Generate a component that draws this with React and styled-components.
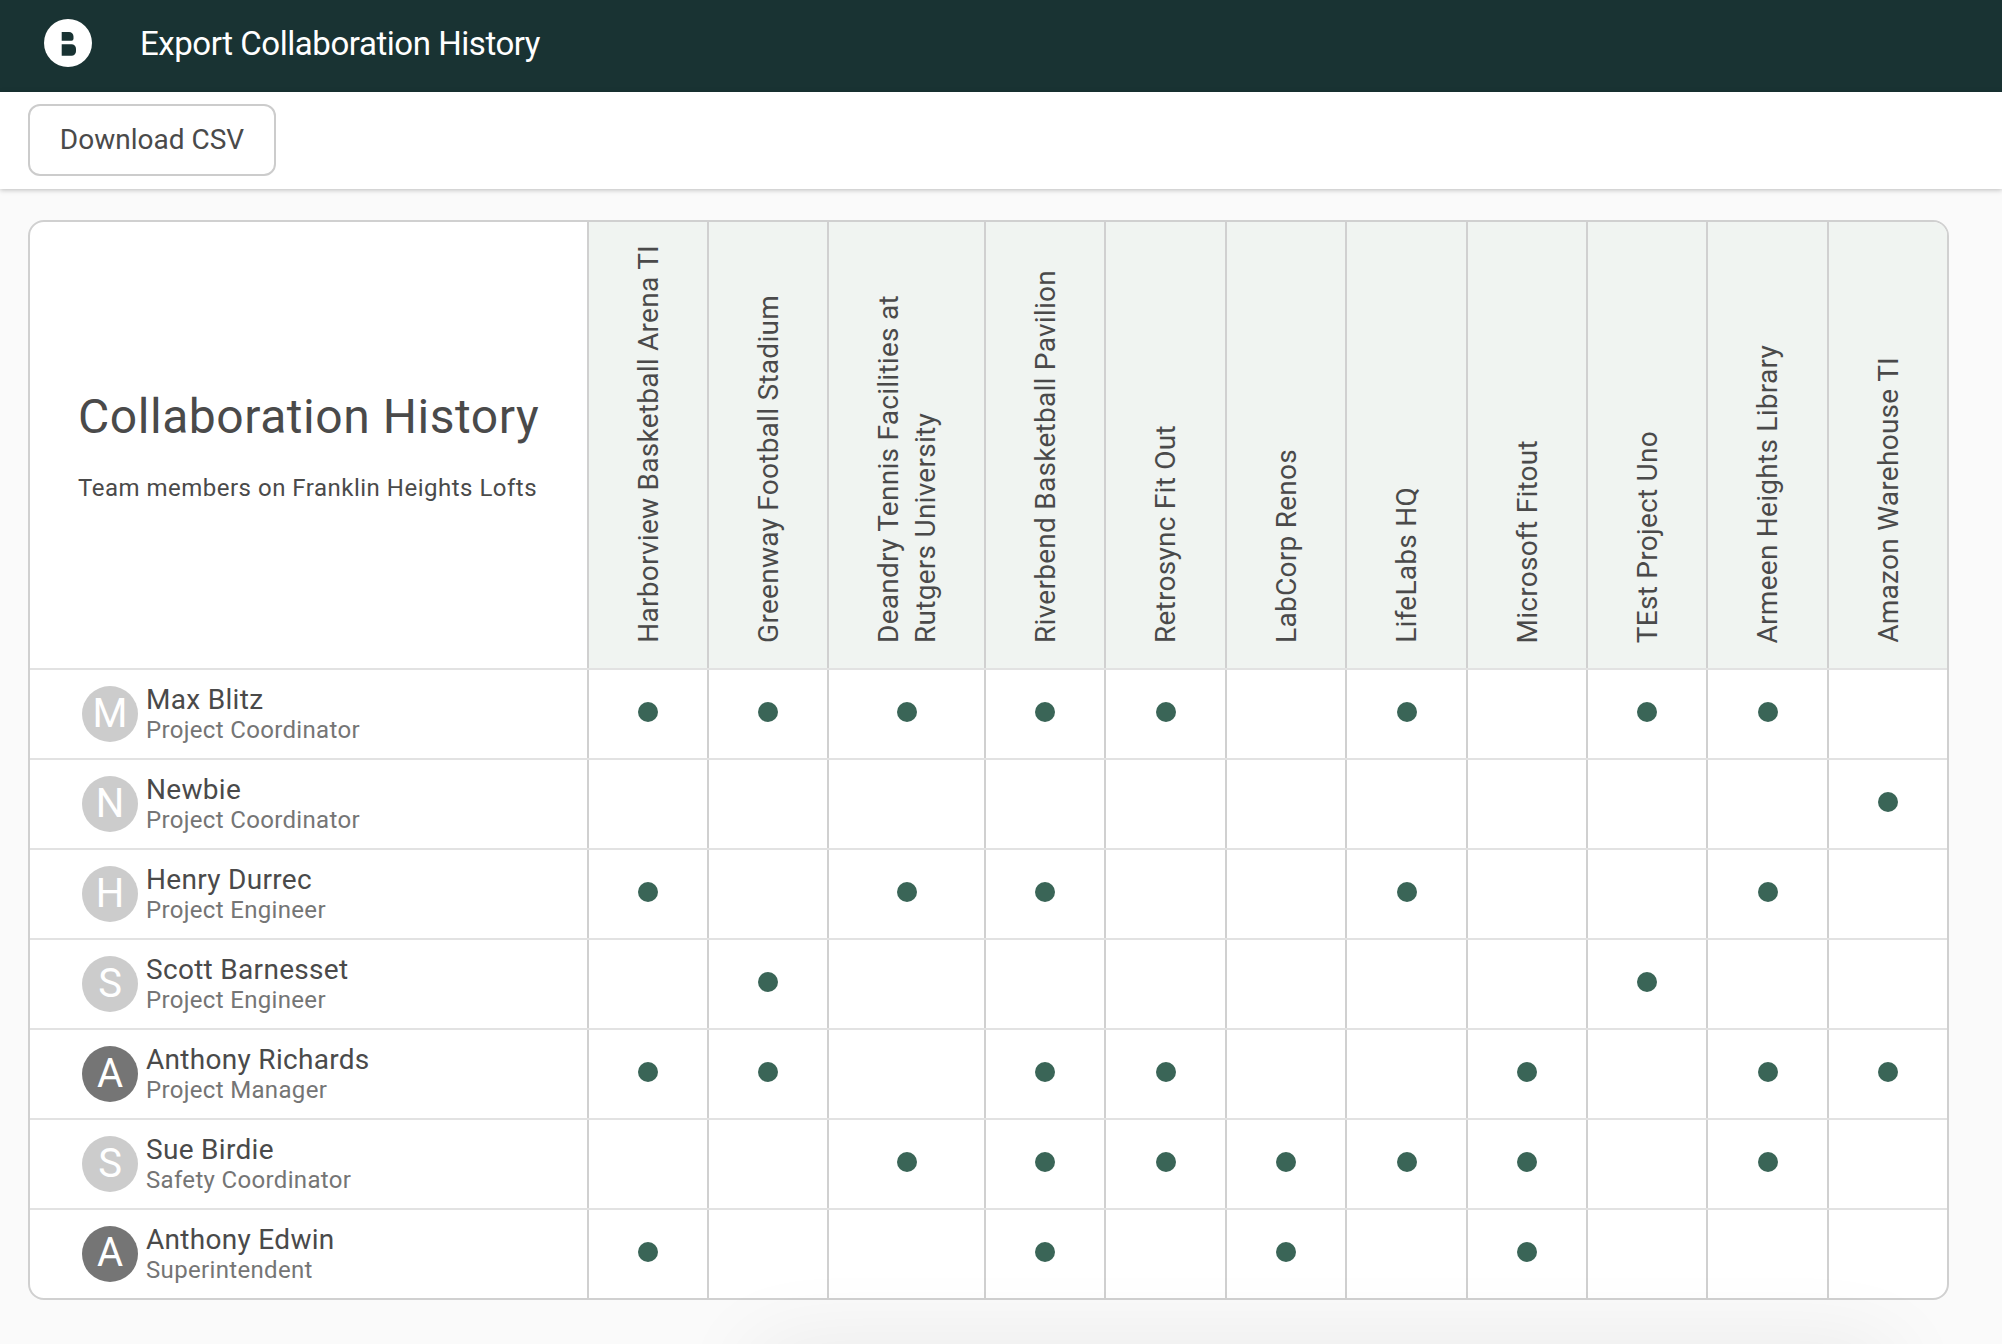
import React from "react";
import styled, { createGlobalStyle } from "styled-components";

const Global = createGlobalStyle`
  html, body { margin: 0; padding: 0; background: #fafafa; }
  body { font-family: Roboto, "Liberation Sans", sans-serif; color: #4a4a4a; overflow: hidden; }
  * { box-sizing: border-box; }
`;

const Page = styled.div`
  width: 2002px;
  height: 1344px;
  display: flex;
  flex-direction: column;
  background: #fafafa;
  position: relative;
  overflow: hidden;
`;
const BottomGlow = styled.div`
  position: absolute;
  top: 1352px;
  left: 755px;
  width: 1135px;
  height: 60px;
  box-shadow: 0 0 90px rgba(0, 0, 0, 0.09);
`;
const TopBar = styled.header`
  height: 92px;
  background: #193333;
  display: flex;
  align-items: center;
  padding: 0 0 6px 44px;
  flex: none;
`;
const Logo = styled.svg`
  width: 48px;
  height: 48px;
  flex: none;
  margin-right: 48px;
`;
const TopTitle = styled.h1`
  margin: 0;
  font-weight: 400;
  font-size: 33px;
  letter-spacing: -0.45px;
  color: #fff;
`;
const Toolbar = styled.div`
  height: 97px;
  flex: none;
  background: #fff;
  padding: 12px 28px 0;
  box-shadow: 0 1px 5px rgba(0, 0, 0, 0.25);
  position: relative;
`;
const DownloadButton = styled.button`
  width: 248px;
  height: 72px;
  background: #fff;
  border: 2px solid #cccccc;
  border-radius: 12px;
  font: 400 28px Roboto, sans-serif;
  color: #4a4a4a;
  padding: 0 0 2px;
`;
const Card = styled.div`
  margin: 31px 0 0 28px;
  width: 1921px;
  background: #fff;
  border: 2px solid #d0d0d0;
  border-radius: 16px;
  overflow: hidden;
  position: relative;
`;
const Grid = styled.table`
  border-collapse: collapse;
  table-layout: fixed;
  width: 1917px;
`;
const IntroCell = styled.th`
  width: 558px;
  height: 447px;
  padding: 3px 0 0 48px;
  text-align: left;
  font-weight: 400;
  vertical-align: middle;
  border-bottom: 2px solid #e2e2e2;
`;
const IntroTitle = styled.div`
  font-size: 48px;
  line-height: 56px;
  color: #4a4a4a;
  letter-spacing: 0.55px;
`;
const IntroSub = styled.div`
  margin-top: 27px;
  font-size: 24px;
  line-height: 32px;
  color: #4a4a4a;
  letter-spacing: 0.5px;
`;
const ProjectCell = styled.th`
  width: ${(p) => p.$width}px;
  background: #f0f4f1;
  border-left: 2px solid #d0d0d0;
  border-bottom: 2px solid #e2e2e2;
  padding: 0 0 25px;
  vertical-align: bottom;
  font-weight: 400;
`;
const ProjectName = styled.div`
  writing-mode: vertical-rl;
  transform: rotate(180deg);
  max-height: 400px;
  margin: 0 auto;
  font-size: 28px;
  line-height: 37px;
  letter-spacing: 0.27px;
  text-align: left;
  color: #4a4a4a;
`;
const Row = styled.tr`
  height: ${(p) => (p.$last ? "88.5px" : "90px")};
`;
const PersonCell = styled.td`
  padding: 0 0 0 52px;
  border-bottom: ${(p) => (p.$last ? "none" : "2px solid #e2e2e2")};
`;
const Person = styled.div`
  display: flex;
  align-items: center;
  gap: 8px;
`;
const Avatar = styled.div`
  width: 56px;
  height: 56px;
  border-radius: 50%;
  background: ${(p) => (p.$dark ? "#757575" : "#cccccc")};
  color: #fff;
  font-size: 40px;
  padding-bottom: 2px;
  display: flex;
  align-items: center;
  justify-content: center;
  flex: none;
`;
const PersonText = styled.div`
  display: flex;
  flex-direction: column;
`;
const Name = styled.div`
  font-size: 28px;
  line-height: 32px;
  letter-spacing: 0.3px;
  color: #4a4a4a;
`;
const Role = styled.div`
  font-size: 24px;
  line-height: 28px;
  letter-spacing: 0.33px;
  color: #757575;
`;
const MarkCell = styled.td`
  border-left: 2px solid #d0d0d0;
  border-bottom: ${(p) => (p.$last ? "none" : "2px solid #e2e2e2")};
  text-align: center;
  padding: 0 0 4px;
`;
const Dot = styled.span`
  display: block;
  width: 20px;
  height: 20px;
  border-radius: 50%;
  background: #3a6557;
  margin: 0 auto;
`;

const projects = [
  { name: "Harborview Basketball Arena TI", width: 120 },
  { name: "Greenway Football Stadium", width: 120 },
  { name: "Deandry Tennis Facilities at Rutgers University", width: 157 },
  { name: "Riverbend Basketball Pavilion", width: 120 },
  { name: "Retrosync Fit Out", width: 121 },
  { name: "LabCorp Renos", width: 120 },
  { name: "LifeLabs HQ", width: 121 },
  { name: "Microsoft Fitout", width: 120 },
  { name: "TEst Project Uno", width: 120 },
  { name: "Armeen Heights Library", width: 121 },
  { name: "Amazon Warehouse TI", width: 119 },
];

const people = [
  { name: "Max Blitz", role: "Project Coordinator", marks: [0, 1, 2, 3, 4, 6, 8, 9] },
  { name: "Newbie", role: "Project Coordinator", marks: [10] },
  { name: "Henry Durrec", role: "Project Engineer", marks: [0, 2, 3, 6, 9] },
  { name: "Scott Barnesset", role: "Project Engineer", marks: [1, 8] },
  { name: "Anthony Richards", role: "Project Manager", marks: [0, 1, 3, 4, 7, 9, 10], dark: true },
  { name: "Sue Birdie", role: "Safety Coordinator", marks: [2, 3, 4, 5, 6, 7, 9] },
  { name: "Anthony Edwin", role: "Superintendent", marks: [0, 3, 5, 7], dark: true },
];

export default function App() {
  return (
    <Page>
      <Global />
      <TopBar>
        <Logo viewBox="0 0 48 48">
          <circle cx="24" cy="24" r="24" fill="#fff" />
          <path
            fill="#193333"
            d="M17.700 13H25a4.500 4.500 0 0 1 4.500 4.500v2.200a2 2 0 0 1-2 2H17.700ZM17.700 25.300H27.500a4.500 4.500 0 0 1 4.500 4.500v2.400a4.500 4.500 0 0 1-4.500 4.500H17.700Z"
          />
        </Logo>
        <TopTitle>Export Collaboration History</TopTitle>
      </TopBar>
      <Toolbar>
        <DownloadButton>Download CSV</DownloadButton>
      </Toolbar>
      <Card>
        <Grid>
          <thead>
            <tr>
              <IntroCell>
                <IntroTitle>Collaboration History</IntroTitle>
                <IntroSub>Team members on Franklin Heights Lofts</IntroSub>
              </IntroCell>
              {projects.map((p) => (
                <ProjectCell key={p.name} $width={p.width}>
                  <ProjectName>{p.name}</ProjectName>
                </ProjectCell>
              ))}
            </tr>
          </thead>
          <tbody>
            {people.map((person, r) => (
              <Row key={person.name} $last={r === people.length - 1}>
                <PersonCell $last={r === people.length - 1}>
                  <Person>
                    <Avatar $dark={person.dark}>{person.name[0]}</Avatar>
                    <PersonText>
                      <Name>{person.name}</Name>
                      <Role>{person.role}</Role>
                    </PersonText>
                  </Person>
                </PersonCell>
                {projects.map((p, c) => (
                  <MarkCell key={p.name} $last={r === people.length - 1}>
                    {person.marks.includes(c) && <Dot />}
                  </MarkCell>
                ))}
              </Row>
            ))}
          </tbody>
        </Grid>
      </Card>
      <BottomGlow />
    </Page>
  );
}
